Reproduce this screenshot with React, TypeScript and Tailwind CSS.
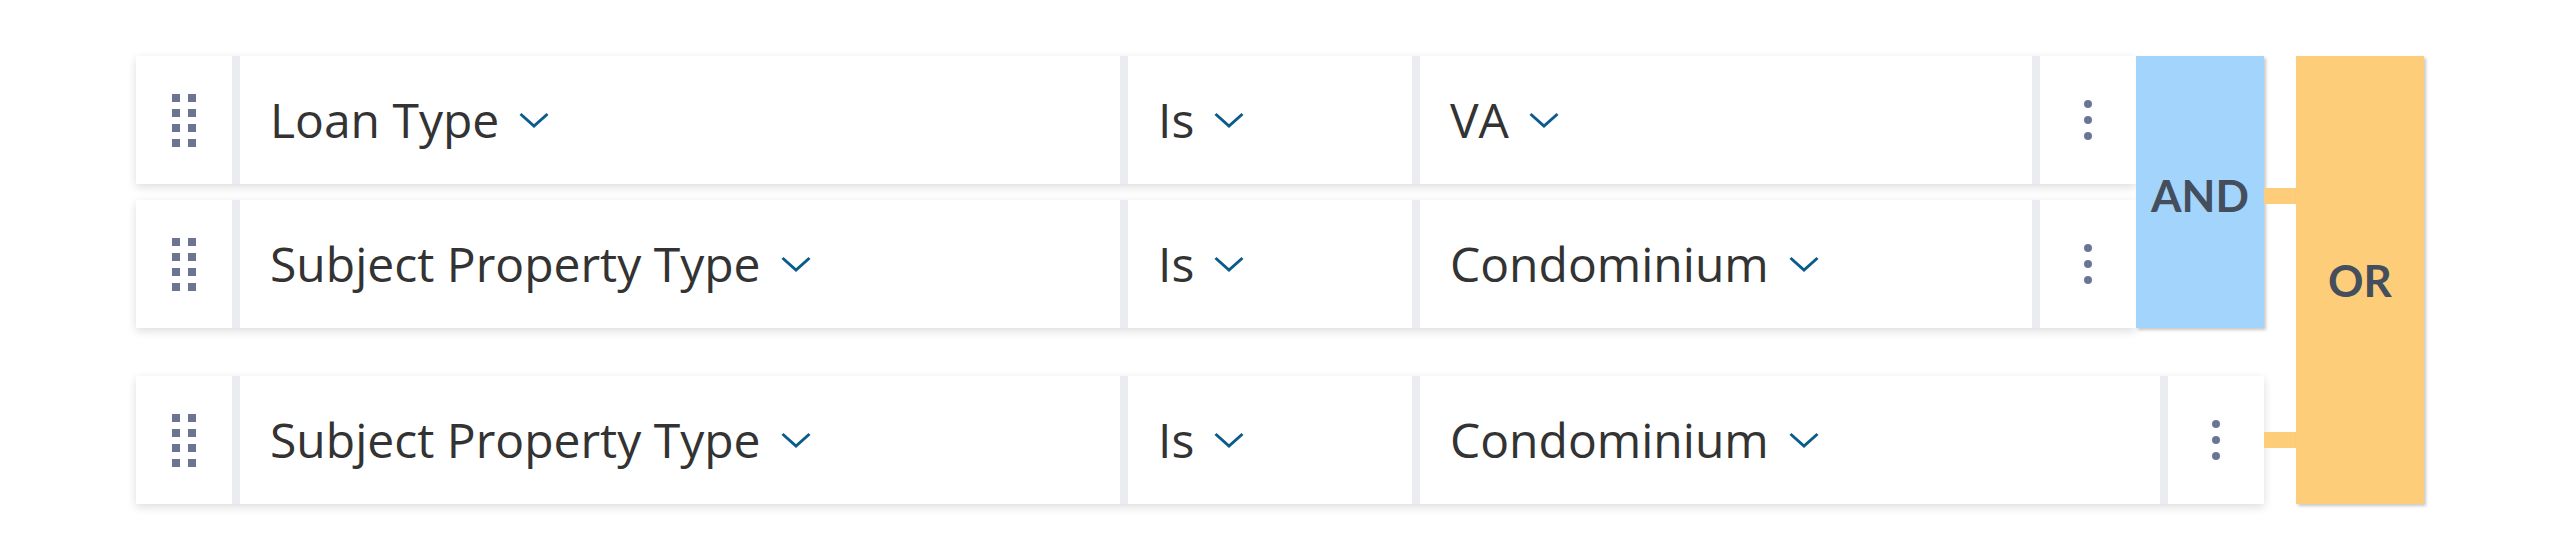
import React from 'react';

const Grip = () => (
  <div className="grid grid-cols-2 gap-x-2 gap-y-[7px]">
    {Array.from({ length: 8 }).map((_, i) => (
      <span key={i} className="block w-2 h-2 bg-[#6b7591]" />
    ))}
  </div>
);

const Dots = () => (
  <div className="flex flex-col gap-2">
    <span className="block w-2 h-2 rounded-full bg-[#6b7591]" />
    <span className="block w-2 h-2 rounded-full bg-[#6b7591]" />
    <span className="block w-2 h-2 rounded-full bg-[#6b7591]" />
  </div>
);

const Chevron = () => (
  <svg width="30" height="16" viewBox="0 0 30 16" fill="none" className="shrink-0">
    <polyline points="1.5,2 15,14 28.5,2" stroke="#0b5b8d" strokeWidth="3" />
  </svg>
);

const Select = ({ label, className }: { label: string; className: string }) => (
  <div className={`bg-white flex items-center gap-5 pl-[30px] ${className}`}>
    <span className="text-[48px] leading-none text-[#333333]">{label}</span>
    <Chevron />
  </div>
);

const Row = ({ field, value, width }: { field: string; value: string; width: string }) => (
  <div className={`flex h-[128px] gap-2 bg-[#ebecf0] shadow-[0_3px_9px_rgba(0,0,0,0.14)] ${width}`}>
    <div className="w-[96px] bg-white flex items-center justify-center">
      <Grip />
    </div>
    <Select label={field} className="w-[880px]" />
    <Select label="Is" className="w-[284px]" />
    <Select label={value} className="flex-1" />
    <div className="w-[96px] bg-white flex items-center justify-center">
      <Dots />
    </div>
  </div>
);

export default function App() {
  return (
    <div className="h-[560px] bg-white pl-[136px] pt-[56px] font-['Open_Sans',sans-serif]">
      <div className="flex items-start">
        {/* conditions */}
        <div className="flex flex-col gap-12 w-[2128px]">
          <div className="flex">
            <div className="flex flex-col gap-4">
              <Row field="Loan Type" value="VA" width="w-[2000px]" />
              <Row field="Subject Property Type" value="Condominium" width="w-[2000px]" />
            </div>
            <div className="w-[128px] bg-[#a2d4fc] flex items-center justify-center shadow-[2px_2px_3px_rgba(0,0,0,0.22)]">
              <span className="font-['Lato',sans-serif] text-[44px] leading-none font-bold text-[#444e5d] pt-[6px]">AND</span>
            </div>
          </div>
          <Row field="Subject Property Type" value="Condominium" width="w-[2128px]" />
        </div>

        {/* connectors */}
        <div className="w-[32px] flex flex-col gap-12">
          <div className="h-[272px] flex items-center pt-2">
            <div className="h-4 w-full bg-[#fdcd7a]" />
          </div>
          <div className="h-[128px] flex items-center">
            <div className="h-4 w-full bg-[#fdcd7a]" />
          </div>
        </div>

        <div className="w-[128px] h-[448px] bg-[#fdcd7a] flex items-center justify-center shadow-[2px_2px_3px_rgba(0,0,0,0.22)]">
          <span className="font-['Lato',sans-serif] text-[44px] leading-none font-bold text-[#444e5d]">OR</span>
        </div>
      </div>
    </div>
  );
}
